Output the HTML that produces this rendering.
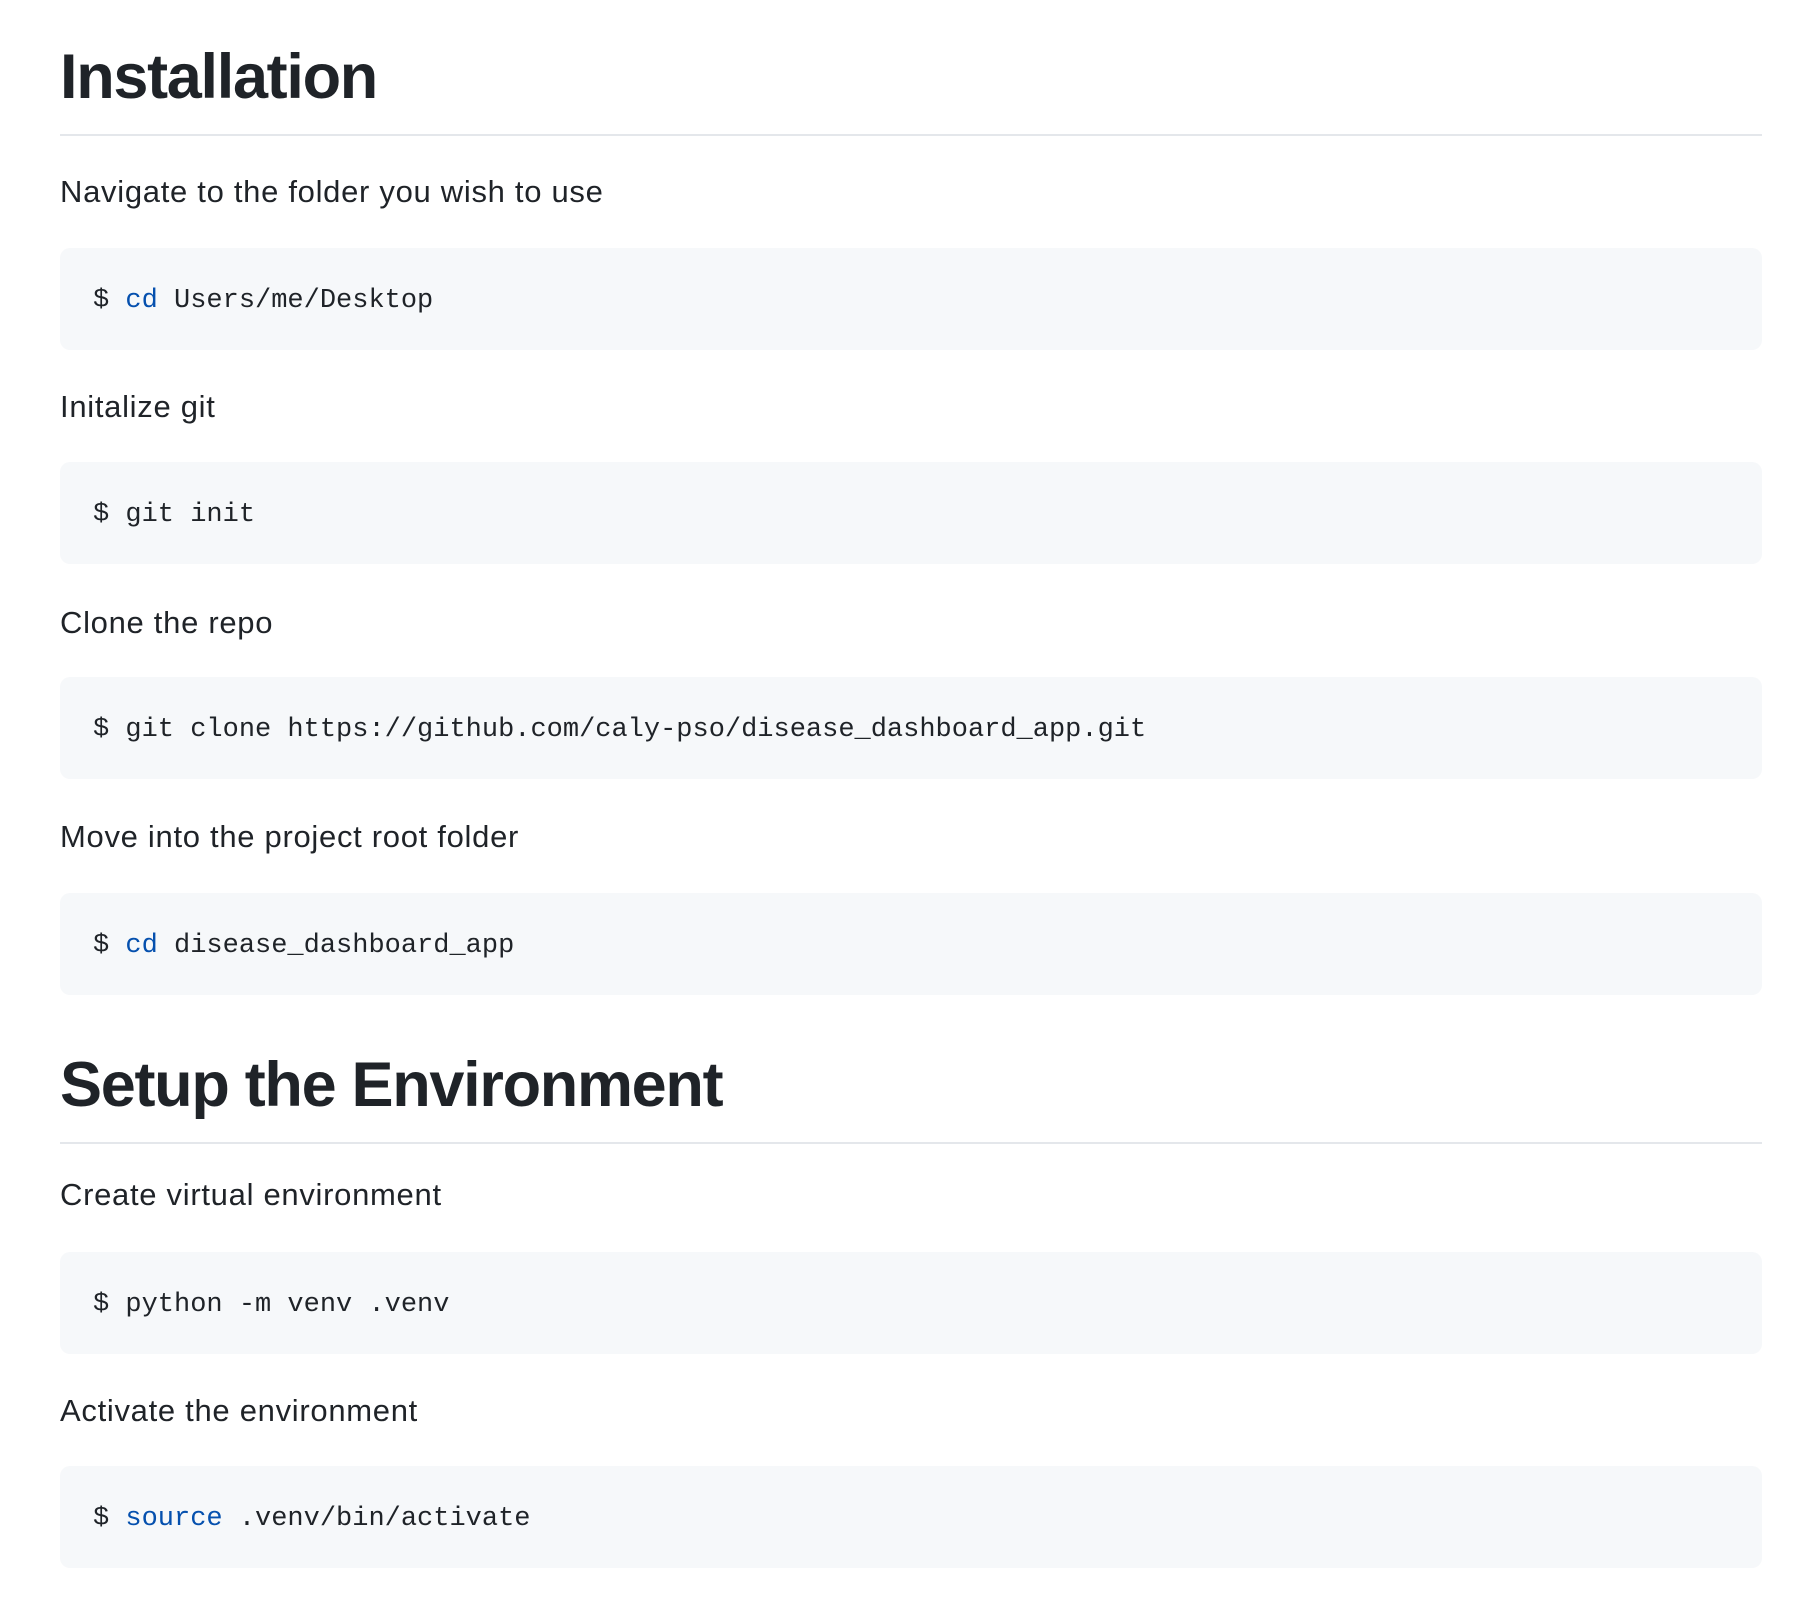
<!DOCTYPE html>
<html><head><meta charset="utf-8"><style>
body{margin:0;width:1820px;height:1604px;background:#fff;position:relative;overflow:hidden;color:#1f2328;font-family:"Liberation Sans",sans-serif}
.a{position:absolute;left:60px;white-space:pre}
.h{font-size:63px;font-weight:bold;line-height:80px;letter-spacing:-1.3px}
.r{position:absolute;left:60px;width:1702px;height:2px;background:#e4e7eb}
.p{font-size:31px;line-height:40px;letter-spacing:0.7px}
.b{position:absolute;left:60px;width:1702px;height:102px;background:#f6f8fa;border-radius:10px}
.c{position:absolute;left:33px;top:33px;font-family:"Liberation Mono",monospace;font-size:27px;line-height:40px;white-space:pre}
.k{color:#0550ae}
</style></head><body>
<div class="a h" style="top:37px">Installation</div>
<div class="r" style="top:134px"></div>
<div class="a p" style="top:172px">Navigate to the folder you wish to use</div>
<div class="b" style="top:248px"><div class="c">$ <span class="k">cd</span> Users/me/Desktop</div></div>
<div class="a p" style="top:387px">Initalize git</div>
<div class="b" style="top:462px"><div class="c">$ git init</div></div>
<div class="a p" style="top:603px">Clone the repo</div>
<div class="b" style="top:677px"><div class="c">$ git clone https://github.com/caly-pso/disease_dashboard_app.git</div></div>
<div class="a p" style="top:817px">Move into the project root folder</div>
<div class="b" style="top:893px"><div class="c">$ <span class="k">cd</span> disease_dashboard_app</div></div>
<div class="a h" style="top:1045px">Setup the Environment</div>
<div class="r" style="top:1142px"></div>
<div class="a p" style="top:1175px">Create virtual environment</div>
<div class="b" style="top:1252px"><div class="c">$ python -m venv .venv</div></div>
<div class="a p" style="top:1391px">Activate the environment</div>
<div class="b" style="top:1466px"><div class="c">$ <span class="k">source</span> .venv/bin/activate</div></div>
</body></html>
